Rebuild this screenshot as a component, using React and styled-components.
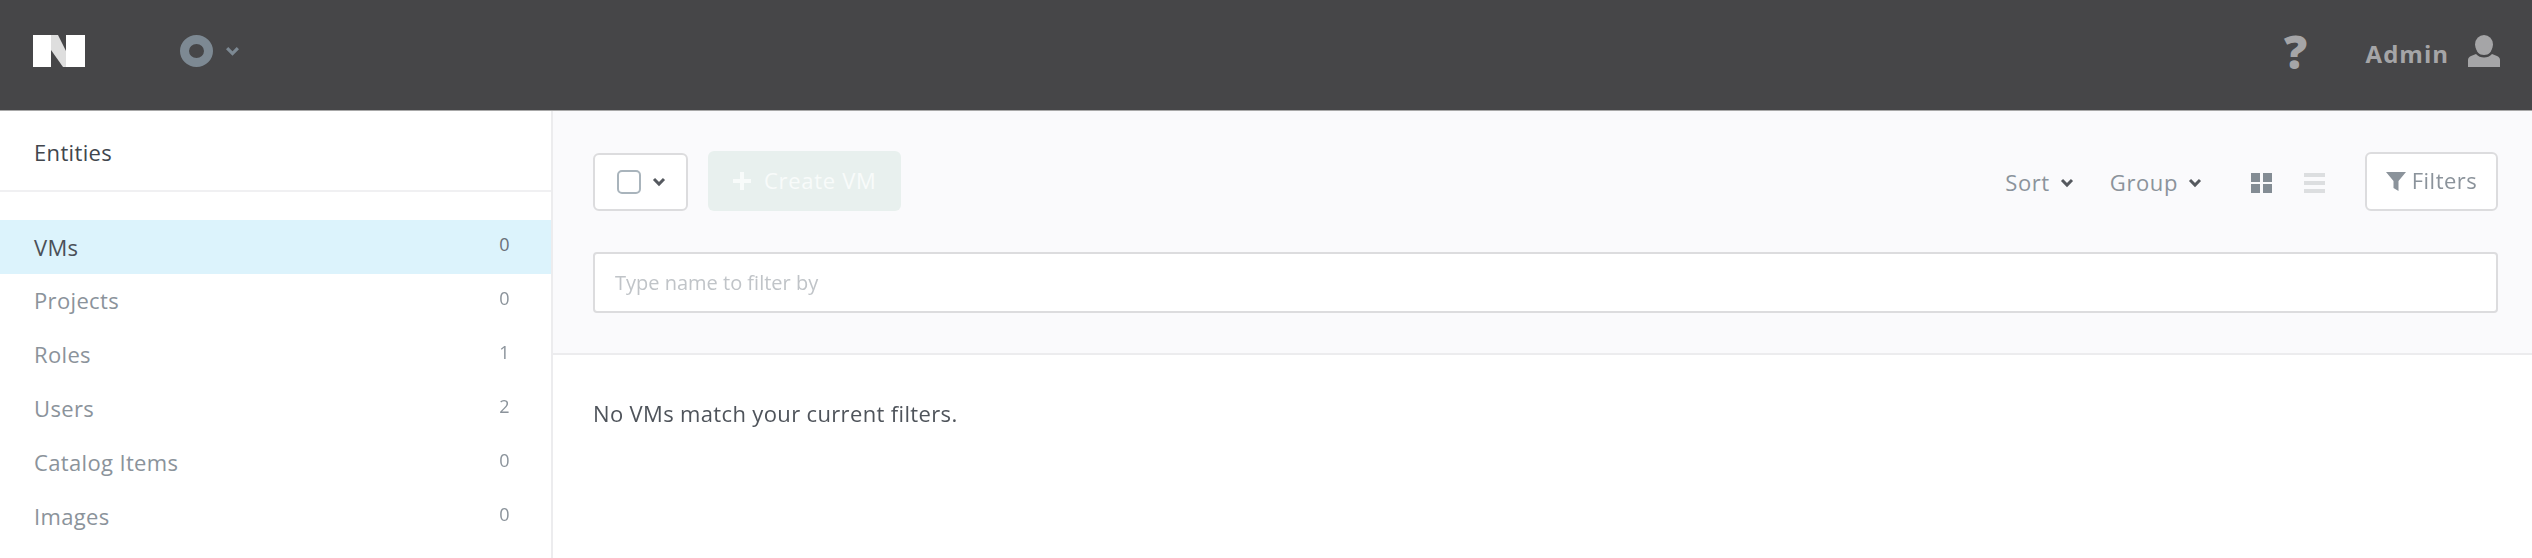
import React from "react";
import styled, { createGlobalStyle } from "styled-components";

const Global = createGlobalStyle`
  html, body { margin: 0; padding: 0; height: 558px; overflow: hidden; background: #fff; }
  body { font-family: "Open Sans", "Noto Sans", sans-serif; font-size: 22px; letter-spacing: 0.35px; color: #4b4f55; }
`;

const Page = styled.div`
  width: 2532px;
  height: 558px;
  display: flex;
  flex-direction: column;
  overflow: hidden;
  filter: blur(0.6px);
`;

const Header = styled.header`
  flex: none;
  box-sizing: content-box;
  background: #464648;
  border-bottom: 1px solid #a8a8a8;
  display: flex;
  align-items: center;
  padding: 0 32px 8px 33px;
  height: 102px;
`;

const LogoMark = styled.svg`
  width: 53px;
  height: 32px;
  display: block;
`;

const StatusDrop = styled.div`
  margin-left: 94px;
  display: flex;
  align-items: center;
  gap: 12px;
`;

const Ring = styled.div`
  box-sizing: border-box;
  width: 33px;
  height: 32px;
  border-radius: 50%;
  border: 9px solid #7d8993;
`;

const HeaderRight = styled.div`
  margin-left: auto;
  display: flex;
  align-items: center;
  color: #a5a5a7;
`;

const HelpGlyph = styled.span`
  font-weight: 800;
  font-size: 46px;
  line-height: 32px;
  width: 22px;
  display: flex;
  justify-content: center;
  margin-right: 59px;
  letter-spacing: 0;
`;

const AdminName = styled.span`
  font-weight: 700;
  font-size: 24px;
  letter-spacing: 1px;
  margin-right: 19px;
  position: relative;
  top: 2px;
`;

const Body = styled.div`
  flex: 1;
  display: flex;
  min-height: 0;
`;

const Sidebar = styled.aside`
  flex: none;
  width: 551px;
  border-right: 2px solid #ececee;
  background: #fff;
`;

const SideTitle = styled.div`
  height: 81px;
  box-sizing: border-box;
  border-bottom: 2px solid #f0f0f2;
  padding: 3px 34px 0;
  display: flex;
  align-items: center;
  color: #41464d;
  margin-bottom: 28px;
`;

const Row = styled.div`
  height: 54px;
  padding: 0 41px 0 34px;
  display: flex;
  align-items: center;
  justify-content: space-between;
  background: ${(p) => (p.$active ? "#dcf3fc" : "transparent")};
  color: ${(p) => (p.$active ? "#4b5058" : "#8b939b")};
`;

const RowName = styled.span`
  margin-bottom: ${(p) => (p.$active ? "0" : "2px")};
`;

const RowCount = styled.span`
  font-size: 18px;
  position: relative;
  top: -3px;
  color: ${(p) => (p.$active ? "#6a7079" : "#8b939b")};
`;

const Main = styled.main`
  flex: 1;
  min-width: 0;
  display: flex;
  flex-direction: column;
`;

const Toolbar = styled.section`
  height: 244px;
  box-sizing: border-box;
  background: #fafafc;
  border-bottom: 2px solid #ececee;
  padding: 40px 34px 0 40px;
`;

const ControlRow = styled.div`
  height: 60px;
  display: flex;
  align-items: center;
`;

const SelectBox = styled.div`
  box-sizing: border-box;
  width: 95px;
  height: 58px;
  margin-top: 2px;
  background: #fff;
  border: 2px solid #dcdcde;
  border-radius: 6px;
  display: flex;
  align-items: center;
  padding-left: 22px;
  gap: 11px;
`;

const CheckSquare = styled.div`
  box-sizing: border-box;
  width: 24px;
  height: 24px;
  border: 2px solid #a9b4bc;
  border-radius: 5px;
  background: #fff;
`;

const CreateButton = styled.div`
  box-sizing: border-box;
  width: 193px;
  height: 60px;
  margin-left: 20px;
  background: #e8f0ee;
  border-radius: 6px;
  color: #f8fbfa;
  display: flex;
  align-items: center;
  padding-left: 25px;
  gap: 13px;
`;

const CreateLabel = styled.span`
  letter-spacing: 0.7px;
  margin-bottom: 3px;
`;

const RightControls = styled.div`
  margin-left: auto;
  display: flex;
  align-items: center;
  height: 60px;
`;

const DropLabel = styled.div`
  display: flex;
  align-items: center;
  gap: 10px;
  color: #8b939b;
  letter-spacing: 0.6px;
  margin-right: ${(p) => p.$gap}px;
  margin-top: 4px;
`;

const DropText = styled.span`
  margin-bottom: 3px;
`;

const ViewIcon = styled.svg`
  width: 21px;
  height: 20px;
  display: block;
  margin-right: ${(p) => p.$gap}px;
  margin-top: 4px;
`;

const FiltersButton = styled.div`
  box-sizing: border-box;
  width: 133px;
  height: 59px;
  background: #fff;
  border: 2px solid #dcdcde;
  border-radius: 6px;
  display: flex;
  align-items: center;
  justify-content: center;
  gap: 6px;
  color: #8b939b;
`;

const FiltersText = styled.span`
  letter-spacing: 0.5px;
  margin-bottom: 3px;
`;

const FilterField = styled.div`
  box-sizing: border-box;
  height: 61px;
  margin-top: 41px;
  background: #fff;
  border: 2px solid #dcdcde;
  border-radius: 4px;
  display: flex;
  align-items: center;
  padding-left: 20px;
  color: #c0c4c8;
  font-size: 20px;
  letter-spacing: 0;
`;

const EmptyText = styled.p`
  margin: 44px 0 0 40px;
  color: #4f545b;
  line-height: 28px;
`;

const Chevron = ({ color = "#55595f", width = 14 }) => (
  <svg width={width} height={width * 0.65} viewBox="0 0 14 9" style={{ display: "block" }}>
    <path d="M2 2l5 5 5-5" fill="none" stroke={color} strokeWidth="3" />
  </svg>
);

const rows = [
  ["VMs", 0, true],
  ["Projects", 0],
  ["Roles", 1],
  ["Users", 2],
  ["Catalog Items", 0],
  ["Images", 0],
];

export default function App() {
  return (
    <>
      <Global />
      <Page>
        <Header>
          <LogoMark viewBox="0 0 53 32">
            <path d="M0 0h18v32H0z" fill="#fff" />
            <path d="M18 0h7l8 16v16h-3L18 15z" fill="#dedede" />
            <path d="M33 0h19v32H33z" fill="#fff" />
          </LogoMark>
          <StatusDrop>
            <Ring />
            <Chevron color="#7d8993" width={15} />
          </StatusDrop>
          <HeaderRight>
            <HelpGlyph>?</HelpGlyph>
            <AdminName>Admin</AdminName>
            <svg width="32" height="32" viewBox="0 0 32 32" style={{ display: "block" }}>
              <ellipse cx="16" cy="9.5" rx="9" ry="9.5" fill="#a5a5a7" />
              <path d="M8 11c0 6 3 9 8 9s8-3 8-9z" fill="#a5a5a7" />
              <path d="M0 32v-7c0-2 1-3 3-4l5-2c2 2.500 5 3.500 8 3.500s6-1 8-3.500l5 2c2 1 3 2 3 4v7z" fill="#a5a5a7" />
            </svg>
          </HeaderRight>
        </Header>
        <Body>
          <Sidebar>
            <SideTitle>Entities</SideTitle>
            {rows.map(([name, count, active]) => (
              <Row key={name} $active={active}>
                <RowName $active={active}>{name}</RowName>
                <RowCount $active={active}>{count}</RowCount>
              </Row>
            ))}
          </Sidebar>
          <Main>
            <Toolbar>
              <ControlRow>
                <SelectBox>
                  <CheckSquare />
                  <Chevron />
                </SelectBox>
                <CreateButton>
                  <svg width="18" height="18" viewBox="0 0 18 18" style={{ display: "block" }}>
                    <path d="M7 0h4v7h7v4h-7v7H7v-7H0V7h7z" fill="#f8fbfa" />
                  </svg>
                  <CreateLabel>Create VM</CreateLabel>
                </CreateButton>
                <RightControls>
                  <DropLabel $gap={36}>
                    <DropText>Sort</DropText> <Chevron />
                  </DropLabel>
                  <DropLabel $gap={49}>
                    <DropText>Group</DropText> <Chevron />
                  </DropLabel>
                  <ViewIcon $gap={32} viewBox="0 0 21 20">
                    <path d="M0 0h9v9H0zM12 0h9v9h-9zM0 11h9v9H0zM12 11h9v9h-9z" fill="#838c94" />
                  </ViewIcon>
                  <ViewIcon $gap={40} viewBox="0 0 21 20">
                    <path d="M0 0h21v4H0zM0 8h21v4H0zM0 16h21v4H0z" fill="#dcdee0" />
                  </ViewIcon>
                  <FiltersButton>
                    <svg width="20" height="19" viewBox="0 0 20 19" style={{ display: "block" }}>
                      <path d="M0 0h20L12.500 9v10l-5-3V9z" fill="#8b939b" />
                    </svg>
                    <FiltersText>Filters</FiltersText>
                  </FiltersButton>
                </RightControls>
              </ControlRow>
              <FilterField>Type name to filter by</FilterField>
            </Toolbar>
            <EmptyText>No VMs match your current filters.</EmptyText>
          </Main>
        </Body>
      </Page>
    </>
  );
}
